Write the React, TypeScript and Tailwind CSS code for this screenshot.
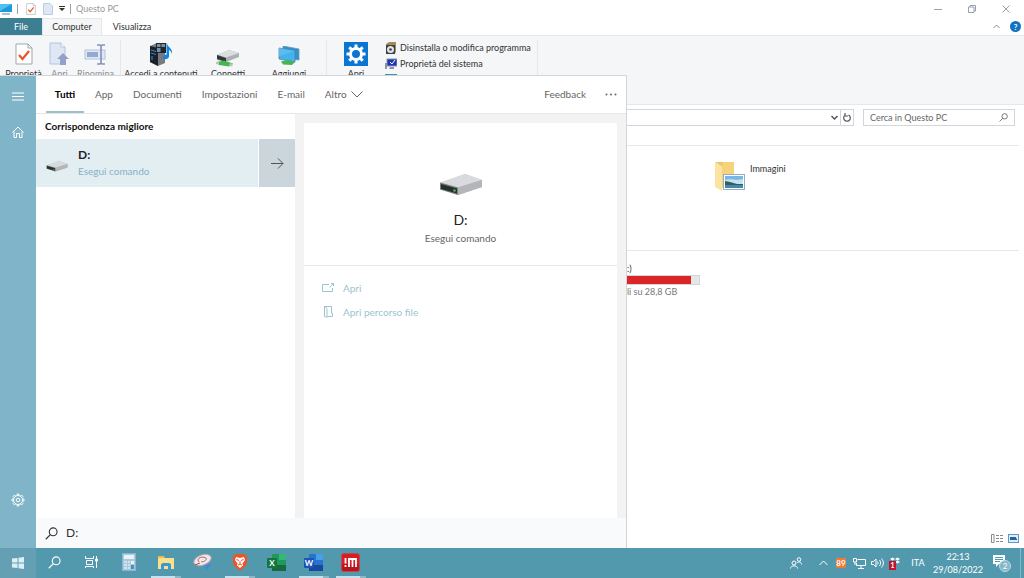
import type { ReactNode } from 'react';

interface IconProps {
  className?: string;
}

function DriveIcon({ className }: IconProps) {
  return (
    <svg className={className} viewBox="0 0 42 22">
      <path d="M0 9 L25 0 L42 6 L42 13 L18 21 L0 15Z" fill="#b4b6b9" />
      <path d="M0 8.500 L25 0 L42 6 L18 13.500Z" fill="#d9dadd" />
      <path d="M18 13.500 L42 6 V13 L18 21Z" fill="#b3b5b8" />
      <path d="M0 8.500 L18 13.500 V21 L0 15.500Z" fill="#7d7f82" />
      <path d="M1 10 L17 14.500 V19.500 L1 15Z" fill="#26302c" />
      <circle cx="14.500" cy="16.500" r="1.200" fill="#42c65a" />
    </svg>
  );
}

function CheckPage({ className }: IconProps) {
  return (
    <svg className={className} viewBox="0 0 18 22" fill="none">
      <path d="M1 1 H13 L17 5 V21 H1Z" fill="#fff" stroke="#9fa6ad" />
      <path d="M13 1 V5 H17" stroke="#9fa6ad" />
      <path d="M4 12 L7.500 16 L14 8" stroke="#e8562a" strokeWidth="2.200" />
    </svg>
  );
}

function OpenPage({ className }: IconProps) {
  return (
    <svg className={className} viewBox="0 0 21 24">
      <path d="M1 1 H12 L16 5 V22 H1Z" fill="#dfe7f5" stroke="#b6c3dc" />
      <path d="M12 1 V5 H16" fill="#fff" stroke="#b6c3dc" />
      <path d="M14 11 L20 17 H17 V23 H11 V17 H8Z" fill="#93a2c6" />
    </svg>
  );
}

function RenameIcon({ className }: IconProps) {
  return (
    <svg className={className} viewBox="0 0 23 21" fill="none">
      <rect x="1" y="6" width="20" height="9" fill="#dfe7f5" stroke="#b6c3dc" />
      <rect x="3" y="8" width="11" height="5" fill="#93a9d2" />
      <path d="M13 1 H16 L17 2 L18 1 H21 M17 2 V19 M13 20 H16 L17 19 L18 20 H21" stroke="#8292b8" strokeWidth="1.600" />
    </svg>
  );
}

function MediaServerIcon({ className }: IconProps) {
  return (
    <svg className={className} viewBox="0 0 24 24">
      <path d="M1 4 L8 1 L16 3 V21 L9 24 L1 20Z" fill="#777b80" />
      <path d="M1 4 L9 6 V24 L1 20Z" fill="#1b2026" />
      <path d="M2 8 L7 9.500 M2 11 L7 12.500 M3 14 V18" stroke="#3a7cc4" strokeWidth="1.200" />
      <path d="M7 1 H17 V11 H7Z" fill="#20262c" />
      <path d="M8 2 H11.500 V5 H8Z M12.500 2 H16 V5 H12.500Z M8 6 H11.500 V10 H8Z" fill="#7493a6" />
      <path d="M18 1 C18 5 24 6 23 12 C22 9 20.500 8 20 8 V14.500 C19.500 18 13.500 18 14 15 C14.500 12.500 17 12.500 17.500 13 V1Z" fill="#1583e0" />
    </svg>
  );
}

function NetworkDriveIcon({ className }: IconProps) {
  return (
    <svg className={className} viewBox="0 0 24 18">
      <path d="M1 6 L13 1 L23 4 V8 L10 13 L1 11Z" fill="#aeb1b4" />
      <path d="M1 5.500 L13 1 L23 4 L10 8.500Z" fill="#dcdddf" />
      <path d="M1 6 L10 9 V13 L1 10Z" fill="#30383a" />
      <path d="M1 13 L8 11.500 L17 14.500 L13 17.500 L3 16Z" fill="#45b653" />
      <path d="M0 13 L3 12.500 V15.500 L0 15Z M14 14 L17 15 L16 17.500 L13 17Z" fill="#b9c7bb" />
    </svg>
  );
}

function NetworkScreensIcon({ className }: IconProps) {
  return (
    <svg className={className} viewBox="0 0 22 20">
      <path d="M5 0 L21 3 V14 L5 12Z" fill="#2c93d4" stroke="#7197ad" strokeWidth=".8" />
      <path d="M1 2 L17 5 V16 L1 13Z" fill="#45b2ed" stroke="#58819a" strokeWidth=".8" />
      <path d="M1 2 L17 5 L1 10Z" fill="#5dbbf0" />
      <path d="M3 15.500 L9 14 L17 16 L14 19 L5 18.500Z" fill="#45b653" />
    </svg>
  );
}

const TEETH = [0, 45, 90, 135, 180, 225, 270, 315];

function SettingsTile({ className }: IconProps) {
  return (
    <svg className={className} viewBox="0 0 24 24">
      <rect width="24" height="24" fill="#0b76d1" />
      <g fill="#fff">
        {TEETH.map((a) => (
          <rect key={a} x="10.500" y="2.500" width="3" height="5" transform={`rotate(${a} 12 12)`} />
        ))}
      </g>
      <circle cx="12" cy="12" r="5.500" fill="none" stroke="#fff" strokeWidth="3" />
    </svg>
  );
}

function SmallGear({ className }: IconProps) {
  return (
    <svg className={className} viewBox="0 0 14 14" fill="none" stroke="currentColor">
      <circle cx="7" cy="7" r="4.500" />
      <circle cx="7" cy="7" r="1.800" />
      {TEETH.map((a) => (
        <path key={a} d="M6 2.500 V1 H8 V2.500" transform={`rotate(${a} 7 7)`} strokeWidth=".9" />
      ))}
    </svg>
  );
}

function Magnifier({ className }: IconProps) {
  return (
    <svg className={className} viewBox="0 0 14 14" fill="none" stroke="currentColor" strokeWidth="1.200">
      <circle cx="8.800" cy="5.200" r="4.200" />
      <path d="M5.800 8.200 L.8 13.200" />
    </svg>
  );
}

function PicturesFolder({ className }: IconProps) {
  return (
    <svg className={className} viewBox="0 0 30 32">
      <path d="M4 1 H19 V27 H4Z" fill="#f5d37c" />
      <path d="M0 1 L7 5 V30 L0 26Z" fill="#fbe3a0" />
      <path d="M0 1 H8 L7 5Z" fill="#eec464" />
      <rect x="8.500" y="13.500" width="21" height="15" fill="#fff" stroke="#8fb0c8" />
      <rect x="10" y="15" width="18" height="12" fill="#78b6e4" />
      <path d="M10 19 C14 17 22 20 28 18 V23 H10Z" fill="#c5e2ee" />
      <path d="M10 20 L15 21 L22 23 L28 23 V24 H10Z" fill="#335f58" />
      <rect x="10" y="24" width="18" height="3" fill="#4687ad" />
    </svg>
  );
}

function CalculatorIcon() {
  return (
    <svg className="h-[18px] w-[14px]" viewBox="0 0 14 18">
      <rect width="13" height="17" x=".5" y=".5" fill="#a9c9dd" stroke="#8fb4cb" />
      <rect x="2" y="2" width="10" height="4" fill="#e9f3f8" />
      <path d="M2 8 H5 V10 H2Z M6 8 H8 V10 H6Z M2 11 H5 V13 H2Z M6 11 H8 V13 H6Z M2 14 H5 V16 H2Z M6 14 H8 V16 H6Z" fill="#cfe2ec" />
      <path d="M9 8 H12 V11 H9Z" fill="#e9f3f8" />
      <path d="M9 12 H12 V16 H9Z" fill="#4d8fc0" />
    </svg>
  );
}

function FolderIcon() {
  return (
    <svg className="h-[15px] w-[18px]" viewBox="0 0 18 15">
      <path d="M1 1 H7 L8 3 H17 V14 H1Z" fill="#e9bd4f" />
      <path d="M1 3 H17 V14 H1Z" fill="#fbe08a" />
      <path d="M4 15 V10 C4 9 5 8 6 8 H12 C13 8 14 9 14 10 V15 H11 V11 H7 V15Z" fill="#3a98d5" />
    </svg>
  );
}

function SnipIcon() {
  return (
    <svg className="h-[18px] w-[20px]" viewBox="0 0 20 18">
      <path d="M11 10 L18 11 L15 17 L11 14Z" fill="#3f8fd0" />
      <ellipse cx="9.500" cy="7" rx="9" ry="5" fill="#eceaec" stroke="#c9a1a8" transform="rotate(-20 9.500 7)" />
      <path d="M6 9 C3 6 8 3 12 4.500 C16 6 10 10 8 8.500" fill="none" stroke="#a9646f" />
      <path d="M2 12 L7 10" stroke="#c33b48" />
    </svg>
  );
}

function BraveIcon() {
  return (
    <svg className="h-[18px] w-[16px]" viewBox="0 0 16 18">
      <path d="M4 1 H12 L15.500 4 L14.500 12 L8 18 L1.500 12 L.5 4Z" fill="#f0532a" />
      <path d="M4 4 L8 5 L12 4 L13 7 L10.500 10.500 L11 12.500 L8 15 L5 12.500 L5.500 10.500 L3 7Z" fill="#fff" />
      <path d="M4.500 6.500 L7 7.500 M11.500 6.500 L9 7.500 M8 8 V11 M6 12 L8 11 L10 12" stroke="#f0532a" fill="none" />
    </svg>
  );
}

function OfficeIcon({ letter, light, mid, dark, tile }: { letter: string; light: string; mid: string; dark: string; tile: string }) {
  return (
    <svg className="h-[17px] w-[19px]" viewBox="0 0 19 17">
      <rect x="5" y="0" width="14" height="17" rx="1" fill={mid} />
      <rect x="12" y="0" width="7" height="6" fill={light} />
      <rect x="5" y="11" width="14" height="6" fill={dark} />
      <rect x="0" y="4" width="10" height="10" rx="1" fill={tile} />
      <text x="5" y="12" textAnchor="middle" fontSize="8" fontWeight="700" fill="#fff">{letter}</text>
    </svg>
  );
}

function PdfAppIcon() {
  return (
    <svg className="h-[19px] w-[19px]" viewBox="0 0 19 19">
      <rect x=".5" y=".5" width="18" height="18" rx="2.500" fill="#d81d27" stroke="#b94a50" />
      <rect x="1" y="11" width="17" height="7" rx="2" fill="#b8141e" />
      <path d="M4.500 5 V10.500 M4.500 12 V14" stroke="#fff" strokeWidth="1.800" />
      <path d="M8 14 V6 H15 V14 M11.500 6 V14" stroke="#fff" strokeWidth="1.800" fill="none" />
    </svg>
  );
}

function RibbonButton({ icon, label, className, muted }: { icon: ReactNode; label: string; className: string; muted?: boolean }) {
  return (
    <button className={`flex shrink-0 flex-col items-center whitespace-nowrap ${className} ${muted ? 'text-[#8b8d90]' : 'text-[#333]'}`}>
      <span className="flex h-7 items-center justify-center">{icon}</span>
      <span className="text-[9px] leading-3">{label}</span>
    </button>
  );
}

function TitleBar() {
  return (
    <header className="flex h-[18px] items-center justify-between">
      <div className="flex items-center text-[#999]">
        <svg className="h-3 w-3" viewBox="0 0 12 12">
          <rect y="1" width="12" height="8" fill="#1c9bdc" />
          <path d="M0 1 H12 L0 8Z" fill="#52c0ee" />
          <path d="M2 11 H10" stroke="#4b87a7" />
        </svg>
        <span className="ml-[5px] h-2.5 w-px bg-gray-400" />
        <CheckPage className="ml-2 h-3 w-[10px]" />
        <svg className="ml-[7px] h-3 w-[10px]" viewBox="0 0 10 12">
          <path d="M.5 .5 H7 L9.500 3 V11.500 H.5Z" fill="#dfe7f5" stroke="#bccbe4" />
        </svg>
        <svg className="ml-[6px] h-[6px] w-[6px]" viewBox="0 0 6 6">
          <path d="M0 0 H6 V1 H0Z M0 2 H6 L3 5Z" fill="#333" />
        </svg>
        <span className="ml-[5px] h-2.5 w-px bg-gray-400" />
        <h1 className="ml-[5px] text-[9px]">Questo PC</h1>
      </div>
      <div className="flex items-center gap-[26px] pr-[14px] text-gray-400">
        <button aria-label="Riduci a icona">
          <svg className="h-2 w-2" viewBox="0 0 8 8"><path d="M0 4.500 H8" stroke="currentColor" /></svg>
        </button>
        <button aria-label="Ripristina">
          <svg className="h-2 w-2" viewBox="0 0 8 8" fill="none" stroke="currentColor">
            <path d="M.5 2 H6 V7.500 H.5Z M2 2 V.5 H7.500 V6 H6" />
          </svg>
        </button>
        <button aria-label="Chiudi">
          <svg className="h-2 w-2" viewBox="0 0 8 8"><path d="M.5 .5 L7.500 7.500 M7.500 .5 L.5 7.500" stroke="currentColor" /></svg>
        </button>
      </div>
    </header>
  );
}

function Ribbon() {
  return (
    <>
      <nav className="flex h-[17px] items-stretch text-[9px] text-[#333]">
        <button className="w-[42px] bg-[#3c7f92] text-white">File</button>
        <button className="w-[60px] border-x border-t border-gray-200 bg-[#f5f6f7]">Computer</button>
        <button className="w-[60px]">Visualizza</button>
        <div className="ml-auto flex items-center gap-[10px] pr-[3px]">
          <button aria-label="Riduci barra multifunzione">
            <svg className="h-[5px] w-[7px]" viewBox="0 0 7 5" fill="none" stroke="#888"><path d="M.5 4 L3.500 1 L6.500 4" /></svg>
          </button>
          <button aria-label="Guida" className="flex h-[11px] w-[11px] items-center justify-center rounded-full bg-[#1472c4] text-[8px] font-bold text-white">?</button>
        </div>
      </nav>
      <div className="flex h-[70px] items-start border-y border-gray-200 bg-[#f4f6f8] pt-1">
        <div className="flex h-16 w-[121px] border-r border-gray-200">
          <RibbonButton className="w-[47px]" label="Proprietà" icon={<CheckPage className="h-[22px] w-[18px]" />} />
          <RibbonButton className="w-[25px]" label="Apri" muted icon={<OpenPage className="h-6 w-[21px]" />} />
          <RibbonButton className="w-[47px]" label="Rinomina" muted icon={<RenameIcon className="h-[21px] w-[23px]" />} />
        </div>
        <div className="flex h-16 w-[206px] border-r border-gray-200">
          <RibbonButton className="w-[80px]" label="Accedi a contenuti" icon={<MediaServerIcon className="h-6 w-6" />} />
          <RibbonButton className="w-[54px]" label="Connetti" icon={<NetworkDriveIcon className="mt-2 h-[18px] w-6" />} />
          <RibbonButton className="w-[68px]" label="Aggiungi" icon={<NetworkScreensIcon className="mt-1 h-5 w-[22px]" />} />
        </div>
        <div className="flex h-16 w-[211px] border-r border-gray-200">
          <RibbonButton className="w-[58px]" label="Apri" icon={<SettingsTile className="h-6 w-6" />} />
          <div className="flex flex-col items-start text-[9px] leading-4 text-[#333]">
            <button className="flex items-center gap-[3px] whitespace-nowrap">
              <svg className="h-3 w-3" viewBox="0 0 12 12">
                <path d="M1 2 L4 0 H11 V10 L9 12 H1Z" fill="#a98a5b" />
                <rect x="1" y="3" width="9" height="9" fill="#39424a" />
                <circle cx="5.500" cy="7.500" r="3.500" fill="#e1e5e8" />
                <circle cx="5.500" cy="7.500" r="1.300" fill="#39424a" />
              </svg>
              Disinstalla o modifica programma
            </button>
            <button className="flex items-center gap-[3px] whitespace-nowrap">
              <svg className="h-3 w-3" viewBox="0 0 12 12">
                <rect x="2" y="1" width="10" height="7" fill="#1d35b4" stroke="#8a93a8" />
                <path d="M5 4 L7 6 L10 2" stroke="#fff" fill="none" />
                <path d="M5 9 H9 V11 H4Z M0 5 H2 V11 H0Z" fill="#8a93a8" />
              </svg>
              Proprietà del sistema
            </button>
            <span className="mt-[2px] h-1 w-3 bg-[#3b94a8]" />
          </div>
        </div>
      </div>
    </>
  );
}

function AddressBar() {
  return (
    <div className="flex items-center gap-[9px] py-1 pr-[9px]">
      <div className="flex h-[17px] flex-1 items-stretch justify-end border border-gray-300 text-[#555]">
        <button aria-label="Percorsi precedenti" className="flex w-3 items-center justify-center">
          <svg className="h-[5px] w-[7px]" viewBox="0 0 7 5" fill="none" stroke="currentColor" strokeWidth="1.500"><path d="M.5 1 L3.500 4 L6.500 1" /></svg>
        </button>
        <button aria-label="Aggiorna" className="flex w-[13px] items-center justify-center border-l border-gray-300">
          <svg className="h-[9px] w-2" viewBox="0 0 8 9" fill="none" stroke="currentColor" strokeWidth="1.200">
            <path d="M5.500 2 A3.300 3.300 0 1 1 2 2.300 M2 0 V3 H5" />
          </svg>
        </button>
      </div>
      <label className="flex h-[17px] w-[152px] items-center border border-gray-300 px-[6px] text-[#555]">
        <input
          aria-label="Cerca in Questo PC"
          placeholder="Cerca in Questo PC"
          className="w-0 flex-1 bg-transparent text-[9px] outline-none placeholder:text-[#666]"
        />
        <Magnifier className="h-[9px] w-[9px]" />
      </label>
    </div>
  );
}

function Explorer() {
  return (
    <section className="flex h-full flex-col bg-white">
      <TitleBar />
      <Ribbon />
      <AddressBar />
      <div className="ml-[622px] mr-[5px] mt-[15px] flex-1">
        <div className="border-t border-gray-200 pb-[57px] pl-[93px] pt-[15px]">
          <div className="flex items-start gap-[5px]">
            <PicturesFolder className="h-8 w-[30px]" />
            <span className="pt-[2px] text-[9px] leading-3 text-[#333]">Immagini</span>
          </div>
        </div>
        <div className="w-full border-t border-gray-200 pt-3">
          <p className="text-[9px] leading-3 text-[#333]">F:)</p>
          <div className="h-[10px] w-[78px] border border-gray-300 bg-[#e6e6e6]">
            <div className="h-full w-[90%] bg-[#da2626]" />
          </div>
          <p className="pl-[5px] text-[9px] leading-[14px] text-[#777]">li su 28,8 GB</p>
        </div>
      </div>
      <footer className="flex h-5 items-center justify-end gap-[5px] pr-[5px]">
        <button aria-label="Dettagli">
          <svg className="h-[9px] w-3" viewBox="0 0 12 9" stroke="#888" fill="none">
            <path d="M.5 .5 H3 V8.500 H.5Z M5 1.500 H8 M9 1.500 H12 M5 4.500 H8 M9 4.500 H12 M5 7.500 H8 M9 7.500 H12" />
          </svg>
        </button>
        <button aria-label="Icone grandi">
          <svg className="h-[9px] w-[11px]" viewBox="0 0 11 9">
            <rect x=".5" y=".5" width="10" height="8" fill="#dcedfb" stroke="#5e99c7" />
            <path d="M2 3 H8 V4 L9 5 V6 H2Z" fill="#2e6294" />
          </svg>
        </button>
      </footer>
    </section>
  );
}

const FILTERS = ['App', 'Documenti', 'Impostazioni', 'E-mail'];

function SearchPanel() {
  return (
    <section className="absolute bottom-0 left-0 top-[75px] flex w-[627px] border-r border-t border-gray-300 bg-white">
      <aside className="flex w-9 flex-col items-center bg-[#80b5c9] pb-[41px] pt-4 text-white">
        <button aria-label="Menu">
          <svg className="h-[9px] w-3" viewBox="0 0 12 9" stroke="currentColor"><path d="M0 1 H12 M0 4.500 H12 M0 8 H12" /></svg>
        </button>
        <button aria-label="Home" className="mt-[25px]">
          <svg className="h-3 w-3" viewBox="0 0 12 12" fill="none" stroke="currentColor">
            <path d="M.5 6.500 L6 1 L11.500 6.500 M2 5.500 V11.500 H4.500 V7.500 H7.500 V11.500 H10 V5.500" />
          </svg>
        </button>
        <button aria-label="Impostazioni" className="mt-auto">
          <SmallGear className="h-[14px] w-[14px]" />
        </button>
      </aside>
      <div className="flex min-w-0 flex-1 flex-col">
        <nav className="flex h-[38px] items-stretch border-b border-gray-200 pl-[10px] pr-[9px] text-[10px] text-[#666]">
          <button className="w-[38px] border-b-2 border-[#9fc0cb] pt-[2px] font-bold text-black">Tutti</button>
          <div className="ml-[11px] flex gap-[20px]">
            {FILTERS.map((name) => (
              <button key={name}>{name}</button>
            ))}
            <button className="flex items-center gap-1">
              Altro
              <svg className="h-[7px] w-3" viewBox="0 0 12 7" fill="none" stroke="currentColor"><path d="M.5 .5 L6 6 L11.500 .5" /></svg>
            </button>
          </div>
          <button className="ml-auto">Feedback</button>
          <button aria-label="Altre opzioni" className="ml-[19px]">
            <svg className="h-[3px] w-3" viewBox="0 0 12 3" fill="currentColor">
              <circle cx="1.500" cy="1.500" r="1" /><circle cx="6" cy="1.500" r="1" /><circle cx="10.500" cy="1.500" r="1" />
            </svg>
          </button>
        </nav>
        <div className="flex flex-1">
          <div className="w-[259px]">
            <h2 className="pl-[9px] text-[10px] font-bold leading-[25px] text-[#111]">Corrispondenza migliore</h2>
            <div className="flex h-12 bg-[#e3eef3]">
              <button className="flex flex-1 items-center text-left">
                <DriveIcon className="ml-[10px] mt-[6px] h-[11px] w-[22px]" />
                <span className="ml-[10px] flex flex-col">
                  <span className="text-xs font-bold leading-4 text-[#222]">D:</span>
                  <span className="text-[10px] leading-4 text-[#86b2c4]">Esegui comando</span>
                </span>
              </button>
              <button aria-label="Mostra dettagli" className="flex w-[37px] items-center justify-center border-l border-white bg-[#cbd5dc]">
                <svg className="h-[11px] w-[13px]" viewBox="0 0 13 11" fill="none" stroke="#555"><path d="M0 5.500 H12 M7 .5 L12 5.500 L7 10.500" /></svg>
              </button>
            </div>
          </div>
          <div className="flex flex-1 bg-[#f3f3f3] pl-[9px] pr-[9px] pt-[9px]">
            <div className="flex-1 bg-white">
              <div className="flex h-[143px] flex-col items-center border-b border-gray-200 pt-[51px]">
                <DriveIcon className="h-[22px] w-[42px]" />
                <p className="mt-[14px] text-sm leading-5 text-[#222]">D:</p>
                <p className="text-[10px] leading-4 text-[#666]">Esegui comando</p>
              </div>
              <div className="flex flex-col items-start pl-[18px] pt-[10px] text-[10px] leading-6 text-[#9bc3d1]">
                <button className="flex items-center gap-[9px]">
                  <svg className="h-[10px] w-3" viewBox="0 0 12 10" fill="none" stroke="currentColor">
                    <path d="M7 1.500 H.5 V8.500 H10.500 V5 M7.500 4.500 L11 1 M9 .5 H11.500 V3" />
                  </svg>
                  Apri
                </button>
                <button className="flex items-center gap-[9px]">
                  <svg className="h-3 w-3" viewBox="0 0 12 12" fill="none" stroke="currentColor">
                    <path d="M2.500 10.500 V.5 H9.500 V7.500 H10.500 V10.500 H5.500 M2.500 .5 L5 2.500 V11.500 L2.500 10" />
                  </svg>
                  Apri percorso file
                </button>
              </div>
            </div>
          </div>
        </div>
        <label className="flex h-[30px] items-center gap-2 bg-[#f9fafc] pl-[9px] text-[#333]">
          <Magnifier className="h-[13px] w-[13px]" />
          <input aria-label="Cerca" defaultValue="D:" className="flex-1 bg-transparent text-xs outline-none" />
        </label>
      </div>
    </section>
  );
}

function TaskButton({ label, open, children }: { label: string; open?: boolean; children: ReactNode }) {
  return (
    <button aria-label={label} className="flex w-[37px] flex-col items-center">
      <span className="flex flex-1 items-center">{children}</span>
      <span className={`flex h-[2px] w-[30px] justify-end ${open ? 'bg-[#c5e1ec]' : ''}`}>
        {open && <span className="w-[6px] bg-[#8fb6c3]" />}
      </span>
    </button>
  );
}

function Taskbar() {
  return (
    <footer className="flex h-[30px] items-stretch bg-[#5299ae] text-white">
      <button aria-label="Start" className="flex w-9 items-center justify-center bg-[#659fb3]">
        <svg className="h-3 w-3" viewBox="0 0 12 12" fill="#dceff5">
          <path d="M0 1.500 L5.500 1 V5.500 H0Z M6.500 .8 L12 0 V5.500 H6.500Z M0 6.500 H5.500 V11 L0 10.500Z M6.500 6.500 H12 V12 L6.500 11.200Z" />
        </svg>
      </button>
      <TaskButton label="Cerca"><Magnifier className="h-[13px] w-[13px]" /></TaskButton>
      <TaskButton label="Visualizzazione attività">
        <svg className="h-3 w-[13px]" viewBox="0 0 13 12" fill="none" stroke="currentColor">
          <path d="M.5 0 V2.500 H8.500 V0 M1.500 4.500 H7.500 V8.500 H1.500Z M.5 12 V10.500 H8.500 V12 M11.500 0 V12" />
          <path d="M10.500 3 H12.500 V5 H10.500Z" fill="currentColor" />
        </svg>
      </TaskButton>
      <TaskButton label="Calcolatrice"><CalculatorIcon /></TaskButton>
      <TaskButton label="Esplora file" open><FolderIcon /></TaskButton>
      <TaskButton label="Strumento di cattura"><SnipIcon /></TaskButton>
      <TaskButton label="Brave" open><BraveIcon /></TaskButton>
      <TaskButton label="Excel"><OfficeIcon letter="X" light="#35b779" mid="#209a5c" dark="#176a3e" tile="#137642" /></TaskButton>
      <TaskButton label="Word" open><OfficeIcon letter="W" light="#44a0e8" mid="#2674cf" dark="#154a9e" tile="#1b55b4" /></TaskButton>
      <TaskButton label="Editor" open><PdfAppIcon /></TaskButton>
      <div className="ml-auto flex items-stretch text-[9px]">
        <button aria-label="Contatti" className="mr-1 flex w-7 items-center justify-center">
          <svg className="h-3 w-3" viewBox="0 0 12 12" fill="none" stroke="currentColor">
            <circle cx="4" cy="6" r="2" /><path d="M.5 11.500 C.5 8 7.500 8 7.500 11.500" />
            <circle cx="9" cy="2.500" r="1.800" /><path d="M7 6 C8 4.500 11.500 4.500 11.500 7.500" />
          </svg>
        </button>
        <button aria-label="Mostra icone nascoste" className="flex w-[18px] items-center justify-center">
          <svg className="h-[6px] w-[9px]" viewBox="0 0 9 6" fill="none" stroke="currentColor"><path d="M.5 5 L4.500 1 L8.500 5" /></svg>
        </button>
        <button className="flex w-[18px] items-center justify-center">
          <span className="bg-[#ee7a3c] text-[8px] font-bold leading-[10px]">89</span>
        </button>
        <button aria-label="Rete" className="flex w-[18px] items-center justify-center">
          <svg className="h-[11px] w-[13px]" viewBox="0 0 13 11" fill="none" stroke="currentColor">
            <path d="M4.500 1.500 H12.500 V7.500 H3.500 V5 M8 7.500 V10 M5 10.500 H11 M.5 .5 H3.500 V4 H.5Z M2 4 V7" />
          </svg>
        </button>
        <button aria-label="Volume" className="flex w-[18px] items-center justify-center">
          <svg className="h-[10px] w-[13px]" viewBox="0 0 13 10" fill="none" stroke="currentColor">
            <path d="M.5 3.500 H2.500 L5 1 V9 L2.500 6.500 H.5Z M6.500 3.500 C7.200 4.500 7.200 5.500 6.500 6.500 M8.500 2 C10 4 10 6 8.500 8 M10.500 .5 C13 3.500 13 6.500 10.500 9.500" />
          </svg>
        </button>
        <button aria-label="Dropbox" className="flex w-[18px] items-center justify-center">
          <svg className="h-[13px] w-3" viewBox="0 0 12 13">
            <path d="M1 2 L3.500 .5 L6 2 L3.500 3.500Z M6 2 L8.500 .5 L11 2 L8.500 3.500Z M6 5 L8.500 3.500 L11 5 L8.500 6.500Z" fill="#fff" />
            <rect y="4" width="7" height="9" fill="#c3142b" />
            <text x="3.500" y="11" textAnchor="middle" fontSize="7" fontWeight="700" fill="#fff">1</text>
          </svg>
        </button>
        <button className="w-7">ITA</button>
        <button className="flex w-[52px] flex-col items-center justify-center leading-[13px]">
          <span>22:13</span>
          <span>29/08/2022</span>
        </button>
        <button aria-label="Notifiche" className="flex w-9 items-center justify-center">
          <svg className="h-[18px] w-[18px]" viewBox="0 0 18 18">
            <path d="M0 1 H12 V10 H6 L3 13 V10 H0Z" fill="#fff" />
            <path d="M2 3.500 H10 M2 5.500 H10 M2 7.500 H7" stroke="#5299ae" />
            <circle cx="12" cy="12" r="5.500" fill="#83b8c9" stroke="#bddae4" />
            <text x="12" y="15" textAnchor="middle" fontSize="8" fill="#fff">2</text>
          </svg>
        </button>
        <button aria-label="Mostra desktop" className="w-1 border-l border-[#86b9c8]" />
      </div>
    </footer>
  );
}

export default function App() {
  return (
    <div className="flex h-screen flex-col overflow-hidden bg-white font-[Lato,sans-serif]">
      <main className="relative min-h-0 flex-1">
        <Explorer />
        <SearchPanel />
      </main>
      <Taskbar />
    </div>
  );
}
